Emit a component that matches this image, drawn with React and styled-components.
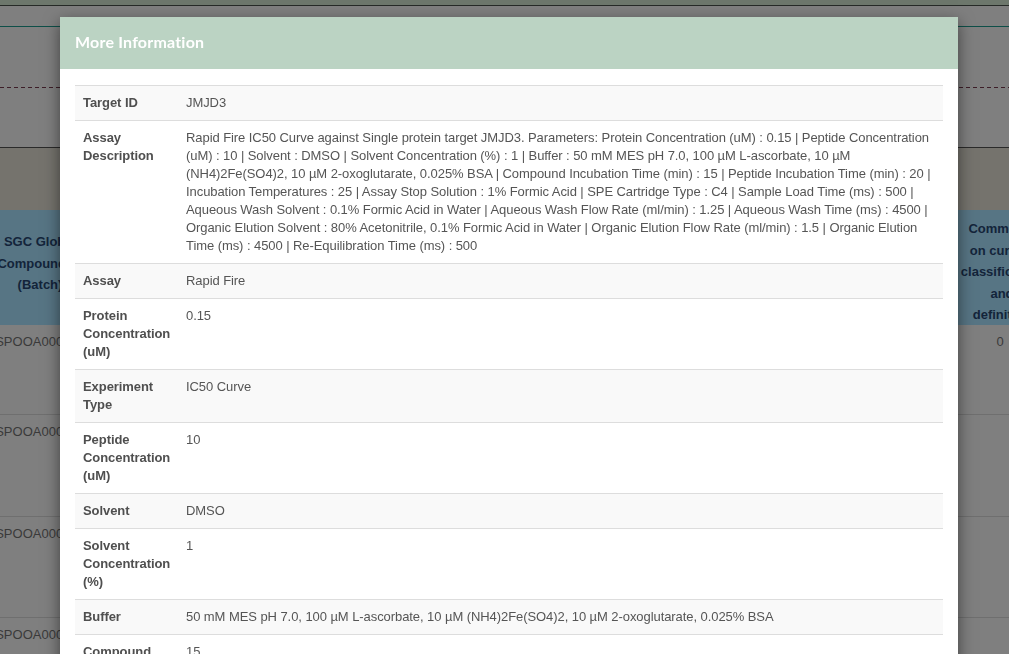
import styled, { createGlobalStyle } from "styled-components"

const GlobalStyle = createGlobalStyle`
    html, body {
        margin: 0;
        padding: 0;
        overflow: hidden;
        background: #7f7f7f;
        font-family: "Liberation Sans", Arial, sans-serif;
        font-size: 13px;
    }
`

const details = [
    ["Target ID", "JMJD3"],
    ["Assay Description", "Rapid Fire IC50 Curve against Single protein target JMJD3. Parameters: Protein Concentration (uM) : 0.15 | Peptide Concentration (uM) : 10 | Solvent : DMSO | Solvent Concentration (%) : 1 | Buffer : 50 mM MES pH 7.0, 100 µM L-ascorbate, 10 µM (NH4)2Fe(SO4)2, 10 µM 2-oxoglutarate, 0.025% BSA | Compound Incubation Time (min) : 15 | Peptide Incubation Time (min) : 20 | Incubation Temperatures : 25 | Assay Stop Solution : 1% Formic Acid | SPE Cartridge Type : C4 | Sample Load Time (ms) : 500 | Aqueous Wash Solvent : 0.1% Formic Acid in Water | Aqueous Wash Flow Rate (ml/min) : 1.25 | Aqueous Wash Time (ms) : 4500 | Organic Elution Solvent : 80% Acetonitrile, 0.1% Formic Acid in Water | Organic Elution Flow Rate (ml/min) : 1.5 | Organic Elution Time (ms) : 4500 | Re-Equilibration Time (ms) : 500"],
    ["Assay", "Rapid Fire"],
    ["Protein Concentration (uM)", "0.15"],
    ["Experiment Type", "IC50 Curve"],
    ["Peptide Concentration (uM)", "10"],
    ["Solvent", "DMSO"],
    ["Solvent Concentration (%)", "1"],
    ["Buffer", "50 mM MES pH 7.0, 100 µM L-ascorbate, 10 µM (NH4)2Fe(SO4)2, 10 µM 2-oxoglutarate, 0.025% BSA"],
    ["Compound Incubation Time (min)", "15"],
    ["Peptide Incubation Time (min)", "20"],
]

const backgroundRows = [
    { id: "SPOOA000271", comment: "0", height: 90 },
    { id: "SPOOA000272", comment: "", height: 102 },
    { id: "SPOOA000273", comment: "", height: 101 },
    { id: "SPOOA000274", comment: "", height: 60 },
]

const App = () => {
    return (
        <>
            <GlobalStyle />
            <Page>
                <TopBar />
                <FilterArea>
                    <TealLine />
                    <DashedLine />
                </FilterArea>
                <SearchBand />
                <HeadRow>
                    <HeadCell $padTop={21}>SGC Global<br />Compound ID<br />(Batch)</HeadCell>
                    <Spacer />
                    <HeadCell $padTop={8}>Comments<br />on current<br />classification<br />and<br />definition</HeadCell>
                </HeadRow>
                {backgroundRows.map(row => (
                    <BodyRow key={row.id} $height={row.height}>
                        <BodyCell>{row.id}</BodyCell>
                        <Spacer />
                        <BodyCell>{row.comment}</BodyCell>
                    </BodyRow>
                ))}
            </Page>

            <Modal>
                <ModalHeader>
                    <ModalTitle>More Information</ModalTitle>
                </ModalHeader>
                <ModalBody>
                    <InfoTable>
                        <colgroup>
                            <col style={{ width: 103 }} />
                            <col />
                        </colgroup>
                        <tbody>
                            {details.map(([label, value], i) => (
                                <InfoRow key={label} $striped={i % 2 === 0}>
                                    <Label>{label}</Label>
                                    <Value>{value}</Value>
                                </InfoRow>
                            ))}
                        </tbody>
                    </InfoTable>
                </ModalBody>
            </Modal>
        </>
    )
}

export default App

const Page = styled.div`
    display: flex;
    flex-direction: column;
    width: 1009px;
    height: 654px;
    overflow: hidden;
`

const TopBar = styled.div`
    height: 5px;
    background: #6d776c;
    border-bottom: 1px solid #262a27;
    flex-shrink: 0;
`

const FilterArea = styled.div`
    height: 142px;
    flex-shrink: 0;
    display: flex;
    flex-direction: column;
    padding-top: 20px;
    box-sizing: border-box;
    border-bottom: 1px solid #2a2a2a;
`

const TealLine = styled.div`
    height: 1px;
    background: #0e4f48;
`

const DashedLine = styled.div`
    margin-top: 60px;
    height: 1px;
    background: repeating-linear-gradient(to right, #3d1e28 0 4px, transparent 4px 7px);
`

const SearchBand = styled.div`
    height: 62px;
    flex-shrink: 0;
    background: #75736d;
`

const HeadRow = styled.div`
    display: flex;
    height: 115px;
    flex-shrink: 0;
    background: #577584;
    margin-left: -10px;
    width: 1062px;
`

const HeadCell = styled.div`
    width: 100px;
    padding-top: ${p => p.$padTop}px;
    box-sizing: border-box;
    text-align: center;
    font-weight: bold;
    line-height: 21.5px;
    color: #13243a;
    white-space: nowrap;
`

const Spacer = styled.div`
    flex: 1;
`

const BodyRow = styled.div`
    display: flex;
    height: ${p => p.$height}px;
    flex-shrink: 0;
    margin-left: -10px;
    width: 1060px;
    border-bottom: 1px solid #6f6f6f;
    box-sizing: border-box;
`

const BodyCell = styled.div`
    width: 100px;
    padding-top: 8px;
    text-align: center;
    line-height: 18px;
    color: #3a3a3a;
`

const Modal = styled.div`
    position: fixed;
    left: 60px;
    top: 17px;
    width: 898px;
    background: #fff;
    box-shadow: 0 5px 15px rgba(0, 0, 0, 0.5);
`

const ModalHeader = styled.div`
    height: 52px;
    display: flex;
    align-items: center;
    padding: 0 15px 4px;
    box-sizing: border-box;
    background: #bbd3c3;
`

const ModalTitle = styled.h4`
    margin: 0;
    font-family: Lato, "Noto Sans", sans-serif;
    font-weight: 700;
    font-size: 16px;
    color: #fff;
    letter-spacing: 0.2px;
`

const ModalBody = styled.div`
    padding: 16px 15px 15px;
`

const InfoTable = styled.table`
    width: 100%;
    border-collapse: collapse;
    table-layout: fixed;
    letter-spacing: -0.07px;
`

const InfoRow = styled.tr`
    background: ${p => (p.$striped ? "#f9f9f9" : "#fff")};
`

const Label = styled.th`
    padding: 8px;
    border-top: 1px solid #ddd;
    text-align: left;
    vertical-align: top;
    font-weight: bold;
    line-height: 18px;
    color: #4f4f4f;
`

const Value = styled.td`
    padding: 8px;
    border-top: 1px solid #ddd;
    vertical-align: top;
    line-height: 18px;
    color: #555;
`
